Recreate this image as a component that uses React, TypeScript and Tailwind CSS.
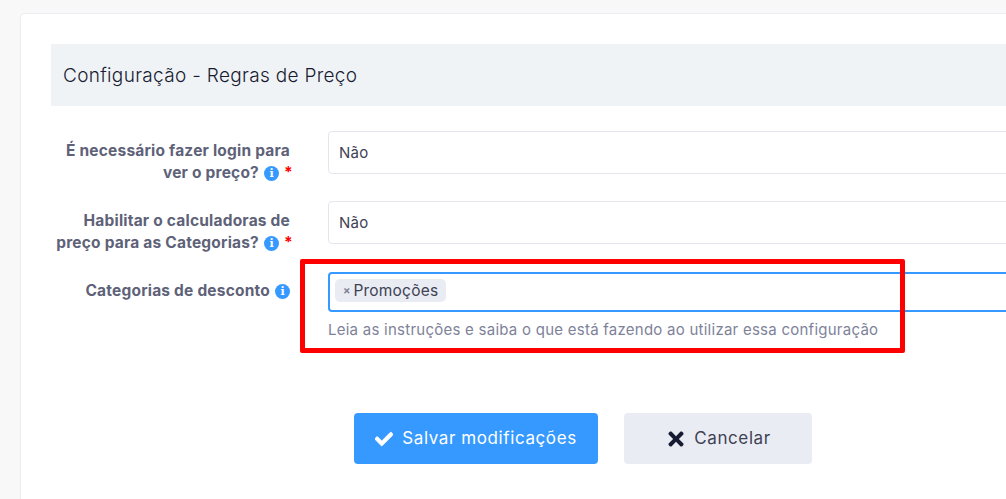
import { FaCheck, FaTimes } from "react-icons/fa";

function InfoIcon() {
    return (
        <span className="inline-flex h-[15px] w-[15px] shrink-0 items-center justify-center rounded-full bg-[#3699ff] font-['DejaVu_Serif'] text-[11px] leading-none font-bold tracking-normal text-white">
            i
        </span>
    );
}

function Label({ lines, required }: { lines: string[]; required?: boolean }) {
    return (
        <div className="w-[239px] shrink-0 text-right text-[15.5px] leading-[22px] font-bold tracking-[0.2px] text-[#5e6278]">
            {lines.map((line, i) => (
                <div key={i} className="flex items-center justify-end gap-[5px] whitespace-nowrap">
                    <span>{line}</span>
                    {i === lines.length - 1 && <InfoIcon />}
                    {i === lines.length - 1 && required && (
                        <span className="w-[6px] text-[#ff0000]">*</span>
                    )}
                </div>
            ))}
        </div>
    );
}

function SelectBox({ value }: { value: string }) {
    return (
        <div className="flex h-[43px] flex-1 items-center rounded-[4px] border border-[#e4e6ef] bg-white px-[10px] pt-[2px] text-[15px] tracking-[0.3px] text-[#3f4254]">
            {value}
        </div>
    );
}

export default function App() {
    return (
        <div className="h-[499px] w-[1006px] overflow-hidden bg-[#f8f8f9] pt-[13px] pl-[20px] font-['Inter',sans-serif]">
            <div className="relative h-[600px] w-[1100px] rounded-[5px] border border-[#ebedf3] bg-white pt-[30px] pl-[30px]">
                <div className="flex h-[62px] items-center bg-[#f0f3f6] pt-[2px] pl-[12px] text-[19px] font-light tracking-[0.32px] text-[#181c32]">
                    Configuração - Regras de Preço
                </div>

                <div className="mt-[25px] flex flex-col gap-[17px]">
                    <div className="flex gap-[38px]">
                        <div className="pt-[9px]">
                            <Label lines={["É necessário fazer login para", "ver o preço?"]} required />
                        </div>
                        <SelectBox value="Não" />
                    </div>
                    <div className="flex gap-[38px]">
                        <div className="pt-[9px]">
                            <Label lines={["Habilitar o calculadoras de", "preço para as Categorias?"]} required />
                        </div>
                        <SelectBox value="Não" />
                    </div>
                    <div className="mt-[1px] flex gap-[38px]">
                        <div className="pt-[8px]">
                            <Label lines={["Categorias de desconto"]} />
                        </div>
                        <div className="flex-1">
                            <div className="flex h-[40px] items-start rounded-[4px] border-2 border-[#3699ff] bg-white px-[5px] pt-[5px]">
                                <span className="flex h-[23px] items-center gap-[3px] rounded-[5px] bg-[#e9ecf3] px-[8px] text-[15.5px] tracking-[0.2px] text-[#3f4254]">
                                    <span className="text-[11px] font-bold tracking-normal text-[#7e8299]">×</span>
                                    Promoções
                                </span>
                            </div>
                            <div className="mt-[8px] text-[15px] leading-[20px] tracking-[0.25px] text-[#7e8299]">
                                Leia as instruções e saiba o que está fazendo ao utilizar essa configuração
                            </div>
                        </div>
                    </div>
                </div>

                <div className="mt-[73px] ml-[303px] flex gap-[26px]">
                    <button className="flex h-[51px] w-[244px] items-center justify-center gap-[9px] rounded-[4px] bg-[#3699ff] pt-[1px] text-[17px] tracking-[0.6px] text-white">
                        <FaCheck className="stroke-[24px] text-[18px]" />
                        Salvar modificações
                    </button>
                    <button className="flex h-[51px] w-[188px] items-center justify-center gap-[7px] rounded-[4px] bg-[#e9ecf3] pt-[1px] text-[17px] tracking-[0.6px] text-[#3f4254]">
                        <FaTimes className="text-[22px] text-[#181c32]" />
                        Cancelar
                    </button>
                </div>

                {/* red annotation box drawn on top of the screenshot */}
                <div className="absolute top-[245px] left-[279px] h-[94px] w-[605px] rounded-[2px] border-[5px] border-[#ff0000]" />
            </div>
        </div>
    );
}
